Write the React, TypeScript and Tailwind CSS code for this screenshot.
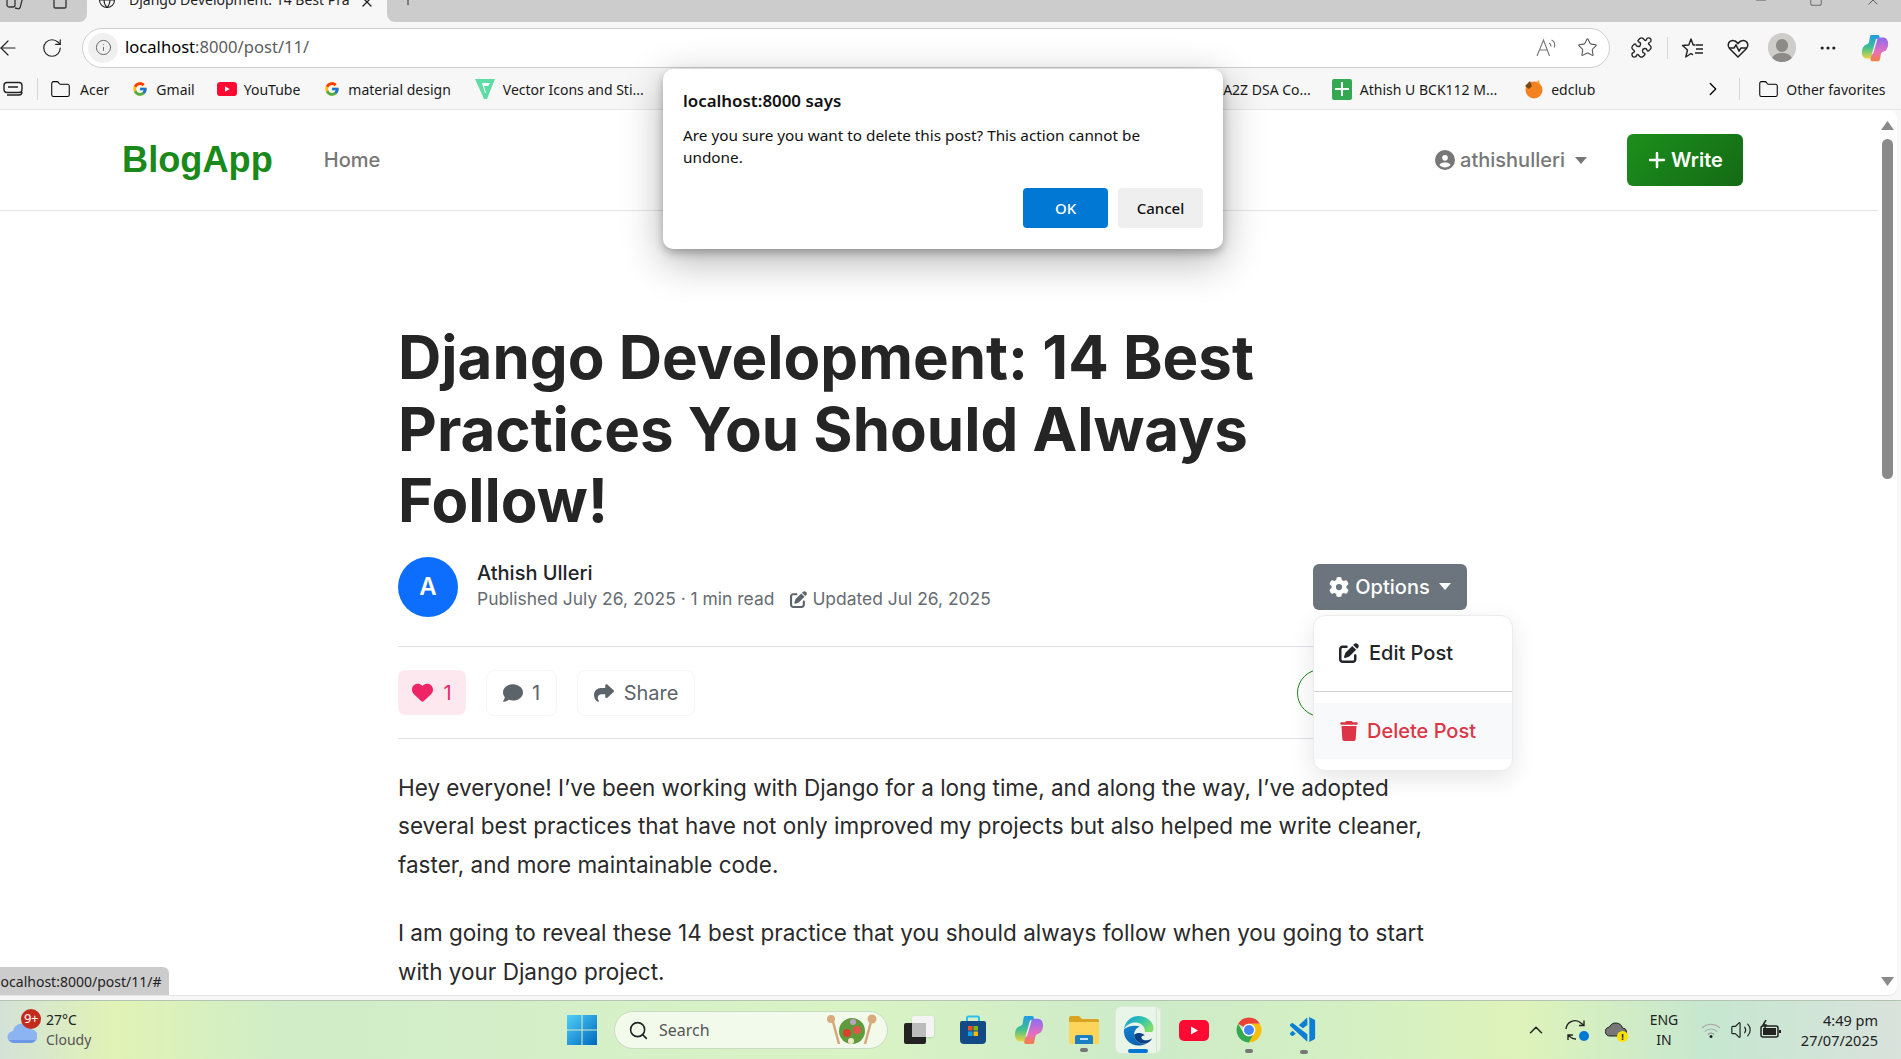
import React from "react";
import { ArrowLeft, RotateCw, Info, Star, Globe, X, Plus, ChevronRight, ChevronUp, Folder, Search, Volume2, MoreHorizontal, Minus, Square, Puzzle } from "lucide-react";
import { FaGear, FaPenToSquare, FaTrash, FaHeart, FaComment, FaShare, FaPlus, FaCircleUser } from "react-icons/fa6";
import { FcGoogle } from "react-icons/fc";
import { VscVscodeInsiders } from "react-icons/vsc";

const ui = "font-['Noto_Sans','Open_Sans',sans-serif]";
const Caret = ({ c }: { c: string }) => (
  <svg width="12" height="7" viewBox="0 0 12 7" className={c}><path d="M0 0h12L6 7z" fill="currentColor" /></svg>
);
const YT = ({ s }: { s: number }) => (
  <svg width={s} height={s * 0.7} viewBox="0 0 30 21"><rect width="30" height="21" rx="5" fill="#ff0a33" /><path d="M12 6.500v8l7-4z" fill="#fff" /></svg>
);
const Copilot = ({ s }: { s: number }) => (
  <svg width={s} height={s} viewBox="0 0 32 32">
    <defs>
      <linearGradient id="cpa" x1="0" y1="0" x2="0" y2="1"><stop offset="0" stopColor="#1e9be8" /><stop offset=".55" stopColor="#45c08d" /><stop offset="1" stopColor="#e9d63e" /></linearGradient>
      <linearGradient id="cpb" x1="0" y1="0" x2="0" y2="1"><stop offset="0" stopColor="#8b6cf0" /><stop offset=".6" stopColor="#e66fc2" /><stop offset="1" stopColor="#f4803f" /></linearGradient>
    </defs>
    <path d="M12 1h7c2 0 2.500 1.500 2 3l-7 21c-.8 2.500-2.500 3-4 3H7c-4 0-6-3-6-7 0-5 2-8 5-9 2-.6 3-1.500 3.500-4C10 3 10.500 1 12 1z" fill="url(#cpa)" />
    <path d="M20 31h-7c-2 0-2.500-1.500-2-3l7-21c.8-2.500 2.500-3 4-3h3c4 0 6 3 6 7 0 5-2 8-5 9-2 .6-3 1.500-3.500 4-.5 4-1 7-2.500 7z" fill="url(#cpb)" />
    <path d="M17 6l2-1-5 17-2 2z" fill="#fff" opacity=".85" />
  </svg>
);
const Sep = () => <div className="w-px h-[22px] bg-[#d5d5d5]" />;

function TabStrip() {
  return (
    <div className="h-[22px] flex bg-[#f7f7f7] shrink-0 overflow-hidden">
      <div className="w-[87px] bg-[#cccccc] rounded-br-lg flex items-center pl-[6px] gap-[28px] text-[#333]">
        <svg width="18" height="16" viewBox="0 0 18 16" fill="none" stroke="currentColor" strokeWidth="1.300" className="-mt-[18px]">
          <rect x="1" y="1" width="8" height="12" rx="2" /><path d="M9 3l6 1.500a1.500 1.500 0 0 1 1 1.800l-1.800 7a2 2 0 0 1-2.400 1.400L9 14" />
        </svg>
        <Square size={16} className="-mt-[18px]" />
      </div>
      <div className="w-[300px] flex items-center pl-[11px] text-[#222]">
        <Globe size={18} strokeWidth={1.4} className="-mt-[22px] shrink-0" />
        <span className={`${ui} ml-[13px] w-[228px] text-[14px] whitespace-nowrap overflow-hidden -mt-[23px] shrink-0`}>Django Development: 14 Best Pra</span>
        <X size={16} className="ml-[2px] -mt-[18px] shrink-0" />
      </div>
      <div className="flex-1 bg-[#cccccc] rounded-bl-lg flex items-center text-[#222]">
        <Plus size={20} strokeWidth={1.1} className="ml-[11px] -mt-[24px]" />
        <div className="ml-auto flex items-center gap-[42px] pr-[20px]">
          <Minus size={16} strokeWidth={1} className="-mt-[22px] -mr-[2px]" />
          <Square size={14} strokeWidth={1} className="-mt-[22px]" />
          <X size={16} strokeWidth={1} className="-mt-[22px]" />
        </div>
      </div>
    </div>
  );
}

function Toolbar() {
  return (
    <div className="h-[46px] pt-[5px] flex items-center bg-[#f7f7f7] shrink-0 text-[#222]">
      <ArrowLeft size={24} strokeWidth={1.2} className="-ml-[4px] shrink-0" />
      <RotateCw size={22} strokeWidth={1.3} className="ml-[21px] shrink-0" />
      <div className="ml-[19px] w-[1528px] h-[40px] rounded-full bg-white border border-[#cfcfcf] flex items-center pl-[5px] pr-[11px]">
        <div className="w-[30px] h-[30px] rounded-full bg-[#f0f0f0] flex items-center justify-center">
          <Info size={17} strokeWidth={1.4} className="text-[#666]" />
        </div>
        <div className={`${ui} ml-[7px] text-[16.6px]`}>
          <span className="text-black">localhost</span><span className="text-[#5c5c5c]">:8000/post/11/</span>
        </div>
        <svg width="24" height="22" viewBox="0 0 24 22" className="ml-auto text-[#777]" fill="none" stroke="currentColor" strokeWidth="1.1">
          <path d="M2 19 8.500 3l6 16M4.500 13h8" />
          <path d="M14 6c1.500.6 2 2 1.800 3.500M16.500 3c3 1.200 3.600 4.500 2.800 7.500" />
        </svg>
        <Star size={21} strokeWidth={1.2} className="ml-[18px] text-[#555]" />
      </div>
      <Puzzle size={23} strokeWidth={1.4} className="ml-[20px] shrink-0" />
      <div className="ml-[14px]"><Sep /></div>
      <svg width="24" height="24" viewBox="0 0 24 24" className="ml-[13px] shrink-0" fill="none" stroke="#222" strokeWidth="1.4" strokeLinejoin="round">
        <path d="M14.500 9h-2.300L10 3 7.800 9l-6.300.5 5 4.500-1.700 7 5.200-3.500 2 1.300" /><path d="M15 9h7M15 13h7M14 17h8" />
      </svg>
      <svg width="24" height="24" viewBox="0 0 24 24" className="ml-[21px] shrink-0" fill="none" stroke="#222" strokeWidth="1.5">
        <path d="M12 21 3.500 12.500C1 10 2 5 6.500 4.500c2.500-.2 4 1 5.500 3 1.500-2 3-3.200 5.500-3 4.500.5 5.500 5.500 3 8z" /><path d="M3 12h5l2-3 3 6 2-3h6" />
      </svg>
      <div className="ml-[18px] w-[28px] h-[29px] rounded-full bg-[#cfcdc9] overflow-hidden flex flex-col items-center justify-end shrink-0">
        <div className="w-[12px] h-[13px] rounded-full bg-[#8d8b87] mb-[1px]" />
        <div className="w-[22px] h-[9px] rounded-t-full bg-[#8d8b87]" />
      </div>
      <MoreHorizontal size={20} strokeWidth={1.8} className="ml-[22px] shrink-0" />
      <div className="ml-[23px] shrink-0"><Copilot s={28} /></div>
    </div>
  );
}

function Mark({ children, text, ml, iconGap = 6 }: { children: React.ReactNode; text: string; ml: string; iconGap?: number }) {
  return (
    <div className={`flex items-center ${ml} shrink-0`}>
      {children}
      <span className="text-[#1a1a1a] whitespace-nowrap" style={{ marginLeft: iconGap }}>{text}</span>
    </div>
  );
}

function Bookmarks() {
  return (
    <div className={`${ui} h-[42px] pt-[1px] flex items-center bg-[#f7f7f7] border-b border-[#e6e6e6] text-[14px] shrink-0`}>
      <svg width="22" height="16" viewBox="0 0 22 16" className="ml-[2px] shrink-0" fill="none" stroke="#222" strokeWidth="1.4">
        <rect x="2" y="1.500" width="18" height="10" rx="3" /><path d="M6 6h10M5 14h12a3 3 0 0 0 3-3" />
      </svg>
      <div className="ml-[13px]"><Sep /></div>
      <Mark ml="ml-[12px]" text="Acer" iconGap={9}><Folder size={21} strokeWidth={1.2} /></Mark>
      <Mark ml="ml-[23px]" text="Gmail" iconGap={8}><FcGoogle size={16} /></Mark>
      <Mark ml="ml-[22px]" text="YouTube" iconGap={7}><YT s={20} /></Mark>
      <Mark ml="ml-[24px]" text="material design" iconGap={8}><FcGoogle size={16} /></Mark>
      <Mark ml="ml-[24px]" text="Vector Icons and Sti..." iconGap={8}>
        <svg width="20" height="22" viewBox="0 0 20 22"><path d="M0 1h20l-8 20h-3z" fill="#5fdca6" /><path d="M7 5h8l-2 3H9l2 7h-1z" fill="#fff" /></svg>
      </Mark>
      <div className="ml-[572px] w-[95px] overflow-hidden whitespace-nowrap text-[#1a1a1a] flex justify-end shrink-0">A2Z DSA Co...</div>
      <Mark ml="ml-[21px]" text="Athish U BCK112 M..." iconGap={8}>
        <div className="w-[20px] h-[21px] bg-[#34a853] rounded-[2px] flex flex-col items-center justify-center relative">
          <div className="w-[14px] h-[2px] bg-white" /><div className="w-[2px] h-[14px] bg-white absolute" />
        </div>
      </Mark>
      <Mark ml="ml-[27px]" text="edclub" iconGap={7}>
        <svg width="20" height="20" viewBox="0 0 20 20"><circle cx="10" cy="11" r="8.500" fill="#f58220" /><path d="M1 7l5-5 2 5-3 3z" fill="#7a4a12" /><path d="M12 3l3-2 1 4z" fill="#f9a94a" /></svg>
      </Mark>
      <ChevronRight size={22} strokeWidth={1.4} className="ml-[107px] shrink-0" />
      <div className="ml-[15px]"><Sep /></div>
      <Mark ml="ml-[18px]" text="Other favorites" iconGap={7}><Folder size={21} strokeWidth={1.2} /></Mark>
    </div>
  );
}

function Nav() {
  return (
    <nav className="h-[101px] border-b border-[#e5e5e5] flex items-center pl-[122px] pr-[135px] shrink-0">
      <div className="font-['Liberation_Sans',sans-serif] font-bold text-[36.2px] text-[#198a19]">BlogApp</div>
      <div className="ml-[51px] font-['Inter',sans-serif] font-medium text-[20px] text-[#777]">Home</div>
      <div className="ml-auto flex items-center text-[#777] font-['Inter',sans-serif] font-medium text-[20px]">
        <FaCircleUser size={20} />
        <span className="ml-[5px]">athishulleri</span>
        <Caret c="ml-[10px]" />
      </div>
      <button className="ml-[40px] w-[116px] h-[52px] rounded-md bg-[linear-gradient(135deg,#1c8f1c,#146a14)] text-white flex items-center justify-center gap-[4px] font-['Inter',sans-serif] font-semibold text-[20px]">
        <FaPlus size={20} />Write
      </button>
    </nav>
  );
}

function Dropdown() {
  return (
    <div className="absolute left-0 top-[51px] w-[200px] h-[156px] bg-white rounded-[12px] border border-[#ececec] shadow-[0_8px_24px_rgba(0,0,0,0.1)] z-10 font-['Inter',sans-serif] text-[20px] font-medium flex flex-col overflow-hidden">
      <div className="h-[76px] shrink-0 flex items-center pl-[25px] text-[#212529] border-b border-[#d0d0d5]">
        <FaPenToSquare size={20} /><span className="ml-[10px]">Edit Post</span>
      </div>
      <div className="mt-[11px] h-[56px] shrink-0 bg-[#f8f9fa] flex items-center pl-[25px] text-[#dc3545]">
        <FaTrash size={20} /><span className="ml-[8px]">Delete Post</span>
      </div>
    </div>
  );
}

function Article() {
  return (
    <article className="ml-[398px] w-[1069px] font-['Inter',sans-serif] pt-[111px]">
      <h1 className="w-[960px] text-[60px] font-bold leading-[71.5px] text-[#252525]">Django Development: 14 Best Practices You Should Always Follow!</h1>
      <div className="mt-[20px] flex items-center">
        <div className="w-[60px] h-[60px] rounded-full bg-[#0d6efd] text-white flex items-center justify-center text-[24px] font-semibold">A</div>
        <div className="ml-[19px] -mt-[1px]">
          <div className="text-[20px] font-medium text-[#212529] leading-[26px]">Athish Ulleri</div>
          <div className="text-[17.45px] text-[#666c72] leading-[26px] flex items-center">
            Published July 26, 2025 · 1 min read
            <FaPenToSquare size={17} className="ml-[16px] mr-[5px] text-[#5c636a]" />Updated Jul 26, 2025
          </div>
        </div>
        <div className="ml-auto relative">
          <button className="w-[154px] h-[46px] rounded-md bg-[#6c757d] text-white flex items-center justify-center text-[20px] font-medium">
            <FaGear size={20} className="mr-[6px]" />Options<Caret c="ml-[9px]" />
          </button>
          <Dropdown />
        </div>
      </div>
      <div className="mt-[29px] border-t border-[#dee2e6]" />
      <div className="mt-[22px] flex items-center text-[20px] text-[#5c636a]">
        <div className="w-[68px] h-[45px] rounded-lg bg-[#fde8ef] text-[#ed2567] flex items-center justify-center gap-[10px]"><FaHeart size={21} />1</div>
        <div className="ml-[20px] w-[71px] h-[46px] rounded-lg border border-[#f6f6f6] flex items-center justify-center gap-[9px]"><FaComment size={20} />1</div>
        <div className="ml-[20px] w-[118px] h-[46px] rounded-lg border border-[#f6f6f6] flex items-center justify-center gap-[10px]"><FaShare size={20} />Share</div>
        <div className="ml-auto mr-[122px] w-[48px] h-[48px] rounded-full border border-[#198a19]" />
      </div>
      <div className="mt-[21px] border-t border-[#dee2e6]" />
      <div className="mt-[30px] text-[22.5px] leading-[38.6px] text-[#2a2a2a]">
        <p>Hey everyone! I’ve been working with Django for a long time, and along the way, I’ve adopted several best practices that have not only improved my projects but also helped me write cleaner, faster, and more maintainable code.</p>
        <p className="mt-[30px]">I am going to reveal these 14 best practice that you should always follow when you going to start with your Django project.</p>
      </div>
    </article>
  );
}

function Scrollbar() {
  return (
    <div className="w-[19px] shrink-0 flex flex-col items-center pt-[11px] pb-[9px] pr-[1px]">
      <svg width="13" height="9" viewBox="0 0 13 9"><path d="M6.500 0 13 9H0z" fill="#8a8a8a" /></svg>
      <div className="mt-[9px] w-[11px] h-[340px] rounded-full bg-[#8a8a8a]" />
      <svg width="13" height="9" viewBox="0 0 13 9" className="mt-auto"><path d="M0 0h13L6.500 9z" fill="#8a8a8a" /></svg>
    </div>
  );
}

function Dialog() {
  return (
    <div className={`${ui} absolute left-[663px] top-[69px] w-[560px] h-[180px] bg-white rounded-[10px] shadow-[0_4px_8px_rgba(0,0,0,0.25),0_12px_40px_rgba(0,0,0,0.3)] z-20 px-[20px] pt-[20px] text-[#111]`}>
      <div className="text-[16.9px] font-semibold leading-[24px]">localhost:8000 says</div>
      <div className="mt-[12px] text-[15.3px] leading-[21.5px] w-[500px]">Are you sure you want to delete this post? This action cannot be undone.</div>
      <div className="absolute right-[20px] bottom-[21px] flex gap-[10px] text-[15px] font-medium">
        <div className="w-[85px] h-[40px] rounded bg-[#0078d4] text-white flex items-center justify-center">OK</div>
        <div className="w-[85px] h-[40px] rounded bg-[#efefef] flex items-center justify-center">Cancel</div>
      </div>
    </div>
  );
}

function Win() {
  return (
    <svg width="30" height="30" viewBox="0 0 30 30">
      <defs><linearGradient id="wn" x1="0" y1="0" x2="1" y2="1"><stop offset="0" stopColor="#4fd0f8" /><stop offset="1" stopColor="#0067c0" /></linearGradient></defs>
      <path d="M0 0h14.500v14.500H0zM15.500 0H30v14.500H15.500zM0 15.500h14.500V30H0zM15.500 15.500H30V30H15.500z" fill="url(#wn)" />
    </svg>
  );
}
function Edge() {
  return (
    <svg width="31" height="31" viewBox="0 0 32 32">
      <defs>
        <linearGradient id="eg1" x1="0" y1="0" x2="1" y2=".6"><stop offset="0" stopColor="#1596d8" /><stop offset=".55" stopColor="#2fc3b0" /><stop offset="1" stopColor="#7fdc6a" /></linearGradient>
        <linearGradient id="eg2" x1="0" y1="0" x2=".6" y2="1"><stop offset="0" stopColor="#1583d0" /><stop offset="1" stopColor="#0c62b0" /></linearGradient>
      </defs>
      <path d="M16 1C8 1 2 7 1 15c3-6 9-8 14-7 5 1 8 5 7.500 9.500H30c1.200-1 1.500-2.500 1.500-4C31.500 7 24 1 16 1z" fill="url(#eg1)" />
      <path d="M1 15c-1 9 6 16.500 15 16.500 3 0 5.800-.8 8-2.200-6.500 1.200-12.500-3-12.500-9 0-4 2.500-7 6-8.300-6-2-13.500 0-16.500 3z" fill="url(#eg2)" />
      <path d="M11.500 20.300c0 6 6 10.200 12.500 9 2.800-.8 5-2.800 6-5.300-3.500 2.800-8.500 2.800-10.500.4-1-1.400-.4-2.900 3-3.400-1.800-2.800-8-3.500-11-.7z" fill="#0a4288" />
    </svg>
  );
}
function Dot({ c = "bg-[#777]", w = "w-[8px]" }: { c?: string; w?: string }) {
  return <div className={`absolute bottom-[-8px] left-1/2 -translate-x-1/2 h-[4px] rounded-full ${w} ${c}`} />;
}

function Taskbar() {
  return (
    <div className={`${ui} h-[59px] shrink-0 border-t border-[#b3c4b3] flex items-center text-[14px] text-[#222] bg-[linear-gradient(90deg,#d3e2d8_0%,#e1f3b5_6%,#d0edc8_15%,#d5efc8_30%,#daf3c4_45%,#cdebc9_60%,#d5f0c2_72%,#def3ba_80%,#c6e7d0_90%,#d9e2dc_100%)]`}>
      <div className="relative ml-[7px] w-[30px] h-[24px] mt-[6px] shrink-0">
        <svg width="30" height="24" viewBox="0 0 30 24"><path d="M7 22a6 6 0 0 1-1-12 9 9 0 0 1 17-2 7 7 0 0 1 1 14z" fill="#8db4f2" /><path d="M7 22a6 6 0 0 1-5-3h27a7 7 0 0 1-5 3z" fill="#6b97e6" /></svg>
        <div className="absolute left-[14px] -top-[12px] w-[20px] h-[20px] rounded-full bg-[#c42b1c] text-white text-[13px] flex items-center justify-center tracking-[-0.5px]">9+</div>
      </div>
      <div className="ml-[9px] w-[60px] leading-[20px] shrink-0">
        <div>27°C</div>
        <div className="text-[#555]">Cloudy</div>
      </div>
      <div className="ml-[461px] shrink-0"><Win /></div>
      <div className="ml-[17px] w-[274px] h-[38px] rounded-full bg-[#f2faec] border border-[#c9dcc3] flex items-center pl-[13px] pr-[9px] shrink-0">
        <Search size={21} strokeWidth={1.8} />
        <span className="ml-[10px] text-[16px] text-[#555]">Search</span>
        <svg width="52" height="34" viewBox="0 0 52 34" className="ml-auto">
          <path d="M6 5l7 26M46 5l-7 26" stroke="#d4a878" strokeWidth="2.500" />
          <circle cx="5" cy="6" r="4" fill="#d9ab7c" /><circle cx="46" cy="6" r="4.500" fill="#d9ab7c" />
          <circle cx="26" cy="18" r="13" fill="#5f9b3a" /><circle cx="21" cy="20" r="4" fill="#d9412f" /><circle cx="31" cy="17" r="4" fill="#e2574a" /><circle cx="27" cy="9" r="3" fill="#b9a3c6" /><circle cx="25" cy="28" r="3" fill="#f2e6c4" />
        </svg>
      </div>
      <div className="ml-[16px] relative w-[30px] h-[28px] shrink-0">
        <div className="absolute right-0 top-0 w-[22px] h-[21px] rounded-[2px] bg-[#f4f4f4] shadow-sm" />
        <div className="absolute left-0 bottom-0 w-[22px] h-[21px] rounded-[2px] bg-[#222]" />
        <div className="absolute left-[8px] top-[7px] w-[14px] h-[14px] bg-[#bcbcbc]" />
      </div>
      <div className="ml-[25px] shrink-0">
        <svg width="28" height="30" viewBox="0 0 28 30">
          <path d="M8 6V3a1.500 1.500 0 0 1 1.500-1.500h9A1.500 1.500 0 0 1 20 3v3" fill="none" stroke="#2bc0ee" strokeWidth="2" />
          <path d="M1 8a2 2 0 0 1 2-2h22a2 2 0 0 1 2 2v17a4 4 0 0 1-4 4H5a4 4 0 0 1-4-4z" fill="#134a86" />
          <rect x="9" y="11" width="4.500" height="4.500" fill="#f25022" /><rect x="14.500" y="11" width="4.500" height="4.500" fill="#7fba00" /><rect x="9" y="16.500" width="4.500" height="4.500" fill="#00a4ef" /><rect x="14.500" y="16.500" width="4.500" height="4.500" fill="#ffb900" />
        </svg>
      </div>
      <div className="ml-[27px] shrink-0"><Copilot s={30} /></div>
      <div className="ml-[25px] relative shrink-0">
        <svg width="30" height="28" viewBox="0 0 30 28">
          <path d="M0 2a2 2 0 0 1 2-2h8l3 3h15a2 2 0 0 1 2 2v5H0z" fill="#d9a520" />
          <path d="M0 6h30v20a2 2 0 0 1-2 2H2a2 2 0 0 1-2-2z" fill="#fcd55a" />
          <path d="M8 19h14a2 2 0 0 1 2 2v7H6v-7a2 2 0 0 1 2-2z" fill="#1b7fc4" /><rect x="11" y="22" width="8" height="2" fill="#bfe3f7" />
        </svg>
        <Dot />
      </div>
      <div className="ml-[16px] relative w-[46px] h-[48px] rounded-md bg-[#e9f5e8] border border-[#dde9d7] flex items-center justify-center shrink-0">
        <div className="absolute right-[3px] top-0 bottom-0 w-px bg-[#d3e4cf]" />
        <Edge />
        <div className="absolute bottom-0 left-1/2 -translate-x-1/2 w-[20px] h-[4px] rounded-full bg-[#0078d4]" />
      </div>
      <div className="ml-[18px] shrink-0"><YT s={30} /></div>
      <div className="ml-[25px] relative shrink-0">
        <svg width="30" height="30" viewBox="0 0 48 48">
          <path d="M24 4a20 20 0 0 1 17.320 10H24a10 10 0 0 0-8.660 5L6.680 14A20 20 0 0 1 24 4z" fill="#ea4335" />
          <path d="M6.680 14A20 20 0 0 0 24 44l8.660-15a10 10 0 0 1-17.320 0z" fill="#34a853" />
          <path d="M41.320 14H24a10 10 0 0 1 8.660 15L24 44a20 20 0 0 0 17.320-30z" fill="#fbbc05" />
          <circle cx="24" cy="24" r="10" fill="#fff" /><circle cx="24" cy="24" r="8" fill="#4285f4" />
        </svg>
        <Dot />
      </div>
      <div className="ml-[24px] relative shrink-0">
        <VscVscodeInsiders size={31} className="text-[#0c7ed6]" />
        <Dot />
      </div>
      <ChevronUp size={22} strokeWidth={1.6} className="ml-[206px] shrink-0" />
      <div className="ml-[17px] relative shrink-0">
        <svg width="24" height="24" viewBox="0 0 24 24" fill="none" stroke="#222" strokeWidth="1.4">
          <path d="M2 11a9 9 0 0 1 15-6l3 2.500M20 2.500v5h-5M4 17l3 2.500a8 8 0 0 0 5 1.500M4 22v-5h5" />
        </svg>
        <div className="absolute right-[-1px] bottom-[1px] w-[10px] h-[10px] rounded-full bg-[#0078d4]" />
      </div>
      <div className="ml-[17px] relative shrink-0">
        <svg width="22" height="16" viewBox="0 0 22 16"><path d="M5 14a4.500 4.500 0 0 1-.5-9 7 7 0 0 1 13 1 4 4 0 0 1 0 8z" fill="#777" stroke="#222" /></svg>
        <div className="absolute right-[-1px] bottom-[-4px] w-[11px] h-[11px] rounded-full bg-[#ffe100] text-[9px] leading-[11px] text-center font-bold">!</div>
      </div>
      <div className="ml-[14px] w-[46px] text-center leading-[20px] shrink-0"><div>ENG</div><div>IN</div></div>
      <svg width="22" height="18" viewBox="0 0 22 18" className="ml-[13px] shrink-0" fill="none" stroke="#aaa" strokeWidth="1.200">
        <path d="M2 7a13 13 0 0 1 18 0M5 10.500a8.500 8.500 0 0 1 12 0" /><path d="M8 13.500a4 4 0 0 1 6 0" stroke="#999" /><circle cx="11" cy="15.500" r="1.500" fill="#222" stroke="none" />
      </svg>
      <Volume2 size={22} strokeWidth={1.3} className="ml-[8px] shrink-0" />
      <svg width="22" height="20" viewBox="0 0 22 20" className="ml-[8px] shrink-0" fill="none" stroke="#222" strokeWidth="1.5">
        <rect x="1" y="6" width="17" height="11" rx="2" /><rect x="3" y="8" width="13" height="7" fill="#222" stroke="none" /><path d="M19 10h2v3h-2z" fill="#222" stroke="none" /><path d="M6 0 3 5h3l-2 5" />
      </svg>
      <div className="ml-auto mr-[23px] text-right leading-[20px] shrink-0 text-[14.5px]"><div>4:49 pm</div><div>27/07/2025</div></div>
    </div>
  );
}

export default function App() {
  return (
    <div className="relative w-[1901px] h-[1059px] overflow-hidden flex flex-col bg-[#f7f7f7]">
      <TabStrip />
      <Toolbar />
      <Bookmarks />
      <main className="flex-1 min-h-0 mr-[4px] mb-[5px] bg-white rounded-br-lg rounded-tr-lg shadow-[0_1px_1px_rgba(0,0,0,0.08)] flex overflow-hidden relative">
        <div className="flex-1 min-w-0 overflow-hidden">
          <Nav />
          <Article />
        </div>
        <Scrollbar />
        <div className={`${ui} absolute -left-[3px] bottom-0 h-[28px] pr-[10px] w-[172px] bg-[#cccccc] rounded-tr-md flex items-center text-[14px] text-[#222] whitespace-nowrap z-10`}>localhost:8000/post/11/#</div>
      </main>
      <Taskbar />
      <Dialog />
    </div>
  );
}
